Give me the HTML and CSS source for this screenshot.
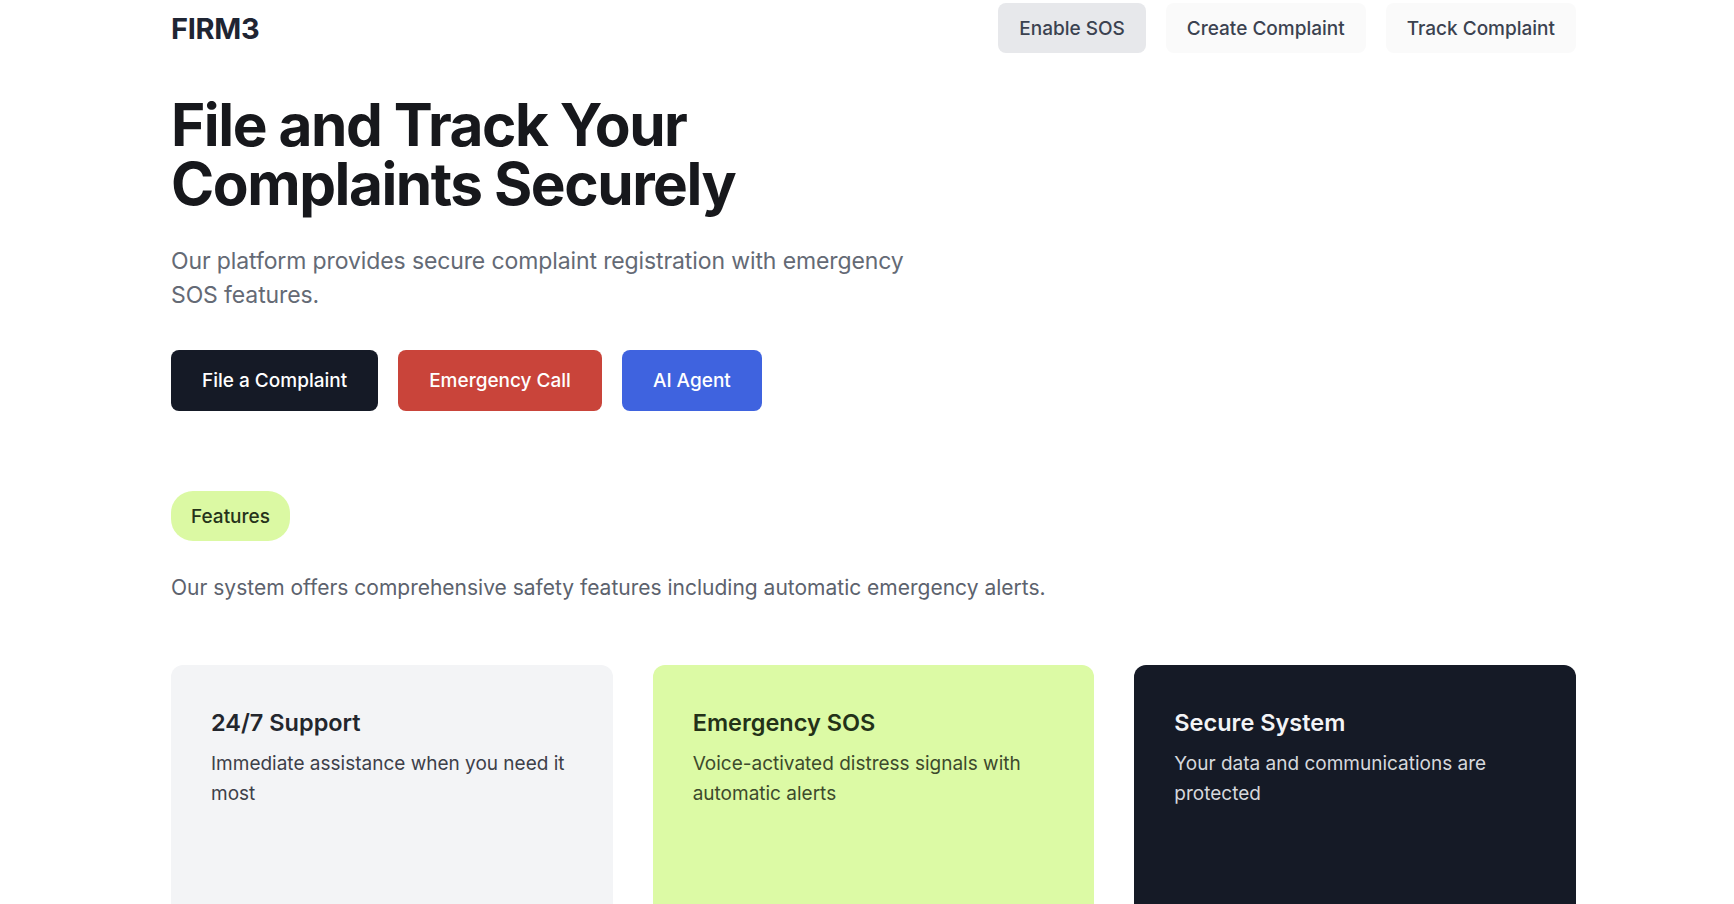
FILE: index.html
```html
<!DOCTYPE html>
<html lang="en">
<head>
<meta charset="utf-8">
<title>FIRM3</title>
<link rel="stylesheet" href="styles.css">
</head>
<body>
<div class="page">
  <header class="topbar">
    <div class="logo">FIRM3</div>
    <nav class="nav">
      <a class="nav-btn nav-btn--active" href="#">Enable SOS</a>
      <a class="nav-btn" href="#">Create Complaint</a>
      <a class="nav-btn" href="#">Track Complaint</a>
    </nav>
  </header>

  <section class="hero">
    <h1 class="hero-title"><span class="hero-line">File and Track Your</span><span class="hero-line">Complaints Securely</span></h1>
    <p class="hero-text">Our platform provides secure complaint registration with emergency SOS features.</p>
    <div class="actions">
      <a class="btn btn--dark" href="#">File a Complaint</a>
      <a class="btn btn--red" href="#">Emergency Call</a>
      <a class="btn btn--blue" href="#">AI Agent</a>
    </div>
  </section>

  <section class="features">
    <span class="pill">Features</span>
    <p class="features-text">Our system offers comprehensive safety features including automatic emergency alerts.</p>
    <div class="cards">
      <div class="card card--gray">
        <h3 class="card-title">24/7 Support</h3>
        <p class="card-text">Immediate assistance when you need it most</p>
      </div>
      <div class="card card--lime">
        <h3 class="card-title">Emergency SOS</h3>
        <p class="card-text">Voice-activated distress signals with automatic alerts</p>
      </div>
      <div class="card card--dark">
        <h3 class="card-title">Secure System</h3>
        <p class="card-text">Your data and communications are protected</p>
      </div>
    </div>
  </section>
</div>
</body>
</html>
```

FILE: styles.css
```css
* { box-sizing: border-box; }

html, body {
  margin: 0;
  padding: 0;
  background: #ffffff;
  font-family: Inter, "Noto Sans", "Liberation Sans", sans-serif;
  color: #111827;
  overflow: hidden;
}

.page {
  padding: 0 158px 0 171px;
}

.topbar {
  display: flex;
  justify-content: space-between;
  align-items: center;
  height: 54px;
  padding-top: 2px;
}

.logo {
  font-size: 29px;
  font-weight: 700;
  color: #1f2533;
  letter-spacing: -0.01em;
}

.nav {
  display: flex;
  gap: 20px;
}

.nav-btn {
  display: flex;
  align-items: center;
  height: 50px;
  padding: 0 21px;
  border-radius: 8px;
  background: #fafafa;
  color: #3b4250;
  font-size: 19px;
  font-weight: 500;
  text-decoration: none;
}

.nav-btn--active {
  background: #e7e8eb;
}

.hero {
  margin-top: 41px;
}

.hero-title {
  margin: 0;
  font-size: 58.5px;
  font-weight: 700;
  letter-spacing: -0.025em;
  color: #17181c;
}

.hero-line {
  display: block;
  height: 59px;
  line-height: 59px;
}

.hero-text {
  margin: 31px 0 0;
  max-width: 780px;
  font-size: 23px;
  line-height: 34px;
  letter-spacing: -0.005em;
  color: #646a75;
}

.actions {
  display: flex;
  gap: 20px;
  margin-top: 38px;
}

.btn {
  display: flex;
  align-items: center;
  height: 61px;
  padding: 0 31px;
  border-radius: 8px;
  color: #ffffff;
  font-size: 19px;
  font-weight: 500;
  text-decoration: none;
}

.btn--dark { background: #151a26; }
.btn--red { background: #c9443a; }
.btn--blue { background: #3f63df; }

.features {
  margin-top: 80px;
}

.pill {
  display: inline-flex;
  align-items: center;
  height: 50px;
  padding: 0 20px;
  border-radius: 22px;
  background: #dbf9a3;
  color: #26331a;
  font-size: 19px;
  font-weight: 500;
}

.features-text {
  margin: 33px 0 0;
  font-size: 21px;
  line-height: 28px;
  color: #5c626d;
}

.cards {
  display: grid;
  grid-template-columns: repeat(3, 1fr);
  gap: 40px;
  margin-top: 63px;
}

.card {
  height: 280px;
  padding: 42px 40px 40px;
  border-radius: 12px;
}

.card-title {
  margin: 0;
  font-size: 23.5px;
  line-height: 32px;
  font-weight: 600;
}

.card-text {
  margin: 10px 0 0;
  font-size: 19px;
  line-height: 30px;
}

.card--gray { background: #f3f4f6; }
.card--gray .card-title { color: #23262d; }
.card--gray .card-text { color: #3d4049; }

.card--lime { background: #dcfaa5; }
.card--lime .card-title { color: #233118; }
.card--lime .card-text { color: #3d4a2c; }

.card--dark { background: #151a26; }
.card--dark .card-title { color: #f3f4f6; }
.card--dark .card-text { color: #d6d8dd; }
```
